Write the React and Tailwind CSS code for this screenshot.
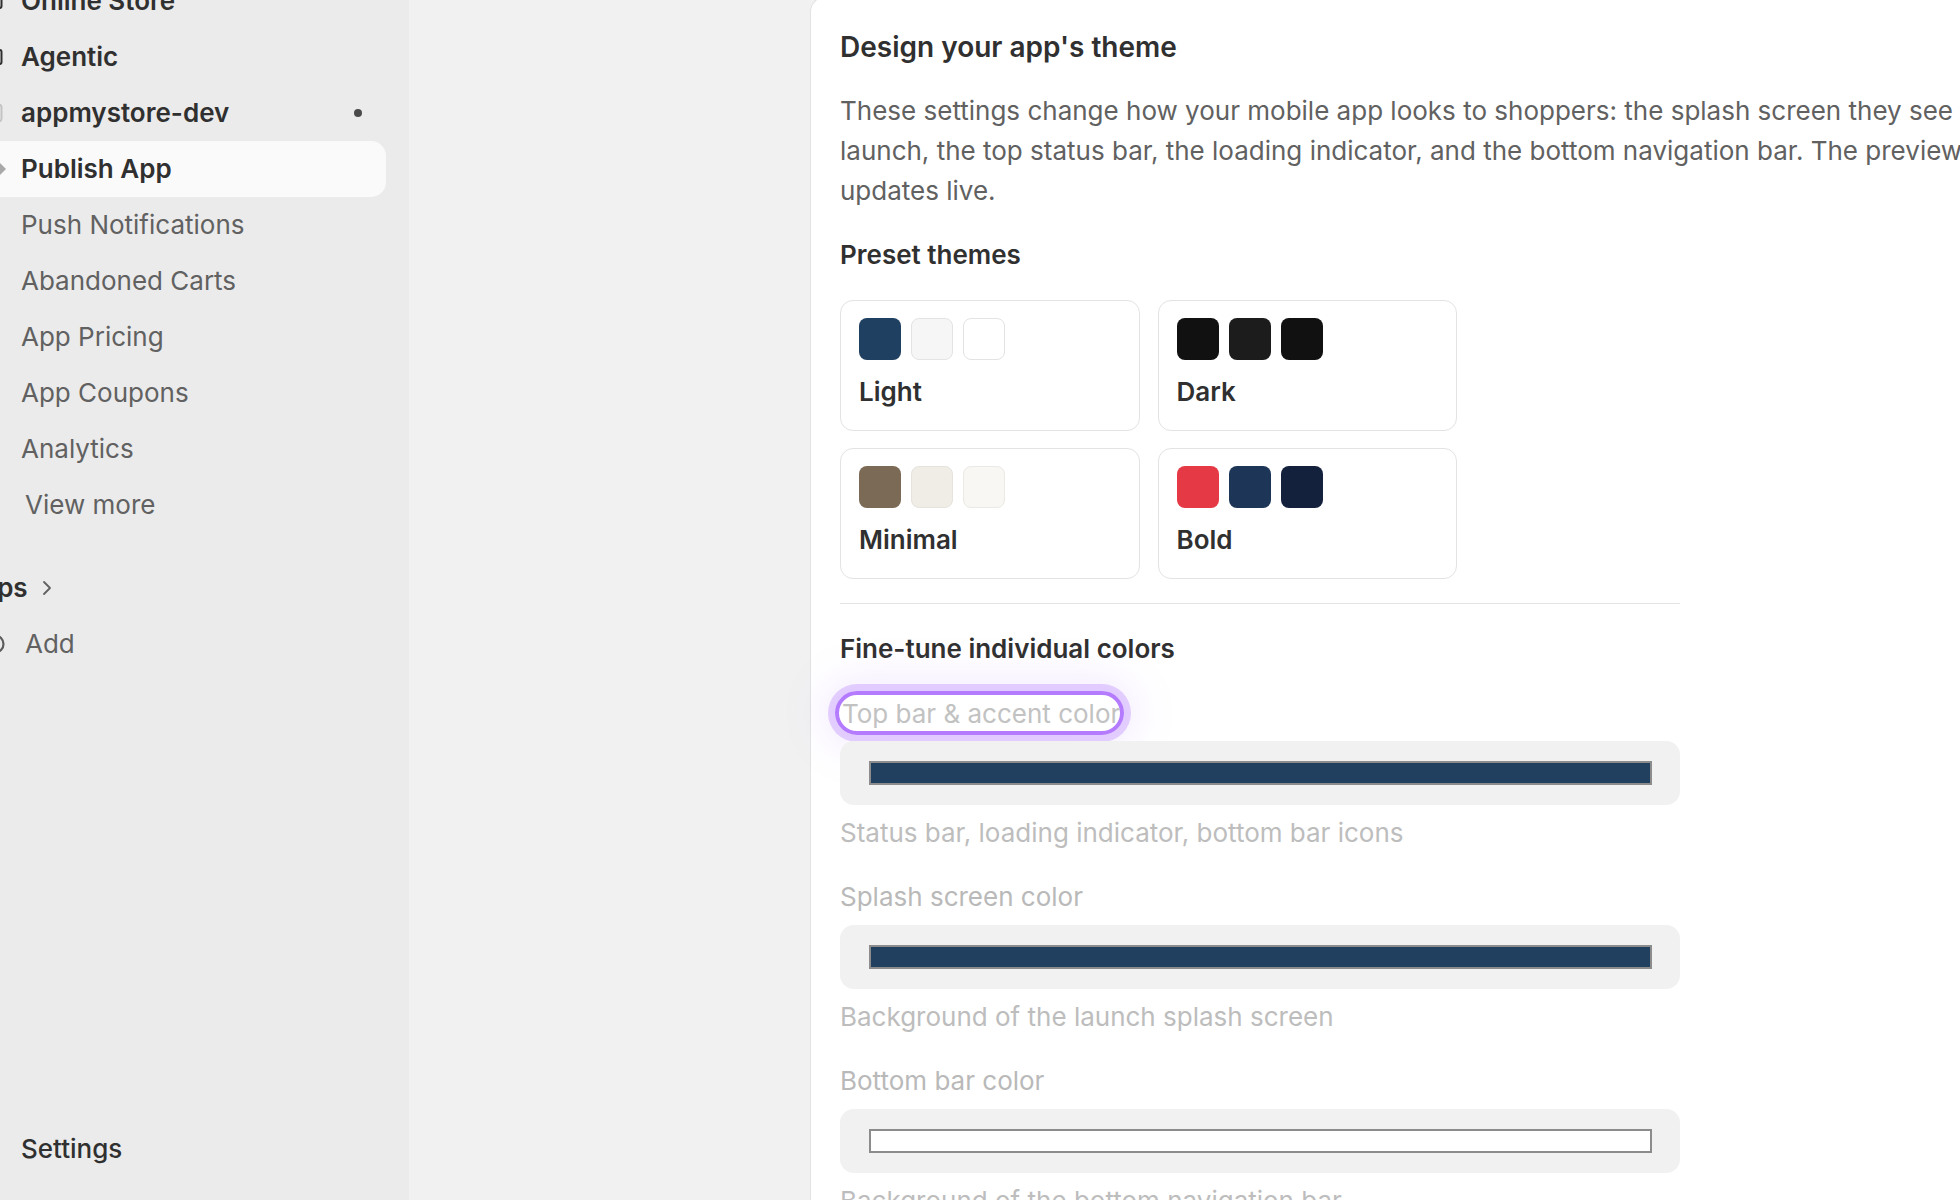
import React from 'react';

// Sidebar rows (left icons are mostly scrolled out of view)
const navItems = [
  { label: 'Online Store', strong: true, icon: 'store' },
  { label: 'Agentic', strong: true, icon: 'store' },
  { label: 'appmystore-dev', strong: true, icon: 'app', dot: true },
  { label: 'Publish App', strong: true, icon: 'publish', active: true },
  { label: 'Push Notifications' },
  { label: 'Abandoned Carts' },
  { label: 'App Pricing' },
  { label: 'App Coupons' },
  { label: 'Analytics' },
  { label: 'View more', wide: true },
];

const presets = [
  { name: 'Light', colors: ['bg-[#1f4060]', 'bg-[#f6f6f6] border border-[#e3e3e3]', 'bg-white border border-[#e3e3e3]'] },
  { name: 'Dark', colors: ['bg-[#111111]', 'bg-[#1c1c1c]', 'bg-[#111111]'] },
  { name: 'Minimal', colors: ['bg-[#7b6a56]', 'bg-[#f0ede7] border border-[#e6e3dd]', 'bg-[#f8f7f4] border border-[#ebe9e4]'] },
  { name: 'Bold', colors: ['bg-[#e63946]', 'bg-[#1d3557]', 'bg-[#14213d]'] },
];

const NavIcon = ({ type }) => {
  if (type === 'store') {
    return (
      <svg width="20" height="20" viewBox="0 0 20 20" className="shrink-0 overflow-visible">
        <rect x="2" y="3" width="16.5" height="14" rx="2" fill="none" stroke="#303030" strokeWidth="2" />
      </svg>
    );
  }
  if (type === 'app') {
    return (
      <svg width="20" height="20" viewBox="0 0 20 20" className="shrink-0 overflow-visible">
        <rect x="2" y="1.5" width="16.5" height="17" rx="3" fill="none" stroke="#c4c4c4" strokeWidth="2" />
      </svg>
    );
  }
  if (type === 'publish') {
    return (
      <svg width="20" height="20" viewBox="0 0 20 20" className="shrink-0 overflow-visible">
        <polygon points="8,3 16,3 23,10 16,17 8,17" fill="#a9a9a9" />
      </svg>
    );
  }
  if (type === 'add') {
    return (
      <svg width="20" height="20" viewBox="0 0 20 20" className="shrink-0 overflow-visible">
        <circle cx="12" cy="10" r="8.5" fill="none" stroke="#5c5c5c" strokeWidth="2.2" />
        <path d="M12 6v8M8 10h8" stroke="#5c5c5c" strokeWidth="2" />
      </svg>
    );
  }
  return <span className="w-[20px] shrink-0" />;
};

const Sidebar = () => (
  <aside className="flex h-full w-[409px] shrink-0 flex-col overflow-hidden bg-[#ebebeb]">
    <div className="-ml-[40px] -mt-[27px] flex w-[426px] flex-col">
      {navItems.map((item) => (
        <div
          key={item.label}
          className={`flex h-[56px] items-center rounded-[15px] pl-[23px] pr-[22px] ${item.active ? 'bg-[#fafafa]' : ''}`}
        >
          <NavIcon type={item.icon} />
          <span
            className={`${item.wide ? 'ml-[22px]' : 'ml-[18px]'} text-[26px] leading-none ${
              item.strong ? 'font-semibold text-[#303030]' : 'text-[#616161]'
            }`}
          >
            {item.label}
          </span>
          {item.dot && <span className="ml-auto mr-[2px] h-[8px] w-[8px] rounded-full bg-[#4a4a4a]" />}
        </div>
      ))}

      <div className="mt-[27px] flex h-[56px] items-center pl-[2px]">
        <span className="text-[26px] font-semibold leading-none text-[#303030]">Apps</span>
        <svg width="12" height="16" viewBox="0 0 12 16" className="ml-[13px]">
          <path d="M3 2l6 6-6 6" fill="none" stroke="#616161" strokeWidth="1.8" strokeLinecap="round" strokeLinejoin="round" />
        </svg>
      </div>
      <div className="flex h-[56px] items-center pl-[23px]">
        <NavIcon type="add" />
        <span className="ml-[22px] text-[26px] leading-none text-[#616161]">Add</span>
      </div>
    </div>

    <div className="mb-[23px] mt-auto flex h-[56px] items-center pl-[21px]">
      <span className="text-[26px] font-medium leading-none text-[#303030]">Settings</span>
    </div>
  </aside>
);

const ColorField = ({ label, help, value, focused }) => (
  <div className="flex flex-col">
    {focused ? (
      <div className="h-[44px]">
        <span className="-ml-[5px] inline-flex h-[44px] w-[289px] items-center whitespace-nowrap rounded-[22px] border-4 border-[#b47bff] pl-[3px] text-[26px] text-[#c2c2c2] shadow-[0_0_0_7px_rgba(190,140,255,0.38),0_0_40px_14px_rgba(190,140,255,0.16)]">
          {label}
        </span>
      </div>
    ) : (
      <span className="text-[26px] leading-[40px] text-[#b9b9b9]">{label}</span>
    )}
    <div className={`${focused ? 'mt-[6px]' : 'mt-[8px]'} flex h-[64px] w-[840px] items-center rounded-[14px] bg-[#f1f1f1] pl-[29px] pr-[28px]`}>
      <div className={`h-[24px] flex-1 border-2 border-[#8c8c8c] ${value}`} />
    </div>
    <span className="mt-[8px] whitespace-nowrap text-[26px] leading-[40px] text-[#bdbdbd]">{help}</span>
  </div>
);

const ThemeCard = () => (
  <section className="-mt-[4px] h-[1220px] w-[1300px] shrink-0 rounded-tl-[16px] border-l border-t border-[#e3e3e3] bg-white pl-[29px] pt-[30px]">
    <h2 className="text-[28px] font-semibold leading-[40px] text-[#303030]">Design your app's theme</h2>
    <p className="mt-[24px] whitespace-nowrap text-[26px] leading-[40px] text-[#616161]">
      These settings change how your mobile app looks to shoppers: the splash screen they see on
      <br />
      launch, the top status bar, the loading indicator, and the bottom navigation bar. The preview
      <br />
      updates live.
    </p>

    <h3 className="mt-[24px] text-[26px] font-semibold leading-[40px] text-[#303030]">Preset themes</h3>
    <div className="mt-[25px] grid w-[617px] grid-cols-2 gap-x-[18px] gap-y-[17px]">
      {presets.map((preset) => (
        <div key={preset.name} className="h-[131px] rounded-[13px] border border-[#e3e3e3] bg-white pl-[18px] pt-[17px]">
          <div className="flex gap-[10px]">
            {preset.colors.map((c, i) => (
              <span key={i} className={`h-[42px] w-[42px] rounded-[8px] ${c}`} />
            ))}
          </div>
          <div className="mt-[14px] text-[26px] font-semibold leading-[36px] text-[#303030]">{preset.name}</div>
        </div>
      ))}
    </div>

    <div className="mt-[24px] h-px w-[840px] bg-[#e3e3e3]" />

    <h3 className="mt-[25px] text-[26px] font-semibold leading-[40px] text-[#303030]">Fine-tune individual colors</h3>
    <div className="mt-[22px] flex flex-col gap-[24px]">
      <ColorField
        focused
        label="Top bar & accent color"
        help="Status bar, loading indicator, bottom bar icons"
        value="bg-[#21405f]"
      />
      <ColorField label="Splash screen color" help="Background of the launch splash screen" value="bg-[#21405f]" />
      <ColorField label="Bottom bar color" help="Background of the bottom navigation bar" value="bg-white" />
    </div>
  </section>
);

export default function App() {
  return (
    <div className="flex h-screen w-screen overflow-hidden bg-[#f1f1f1] font-['Inter','Noto_Sans',sans-serif]">
      <Sidebar />
      <div className="w-[401px] shrink-0 bg-[#f1f1f1]" />
      <ThemeCard />
    </div>
  );
}
